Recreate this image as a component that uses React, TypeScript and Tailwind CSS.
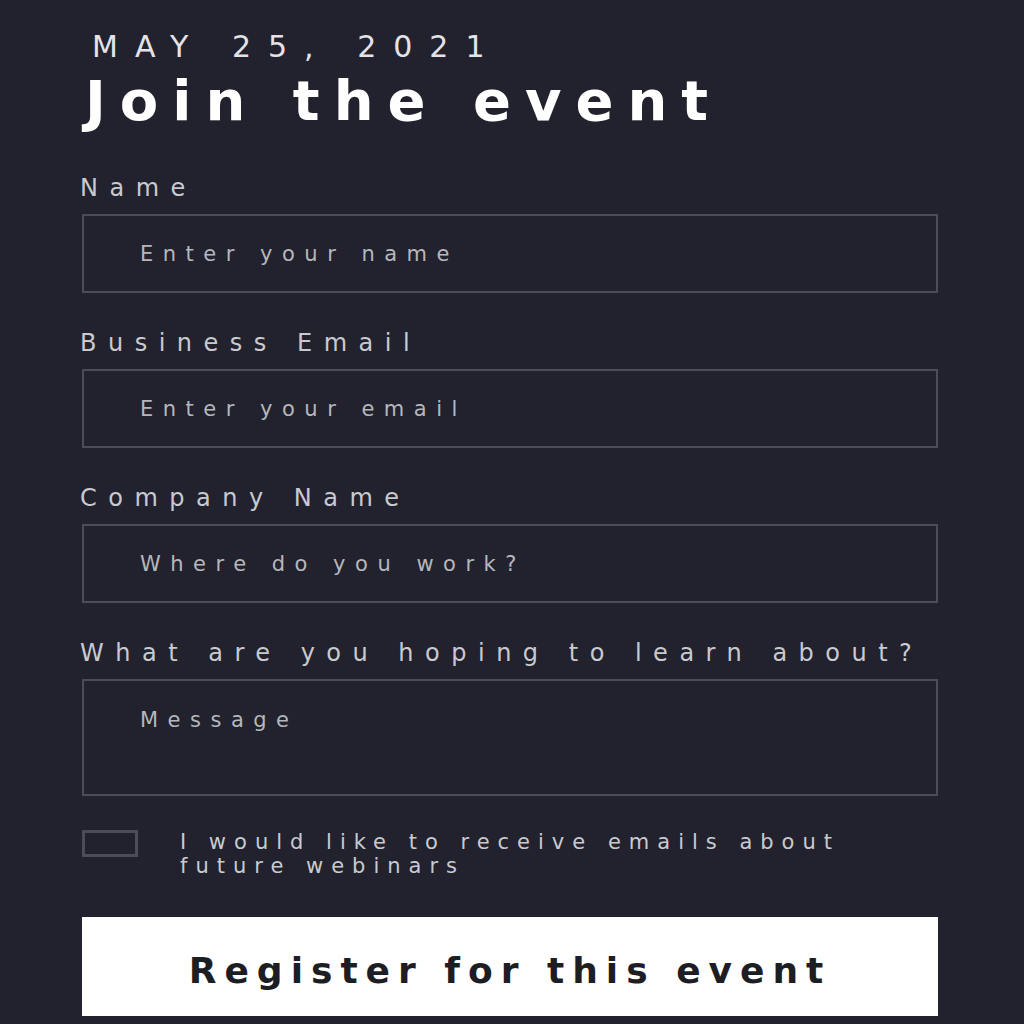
import React from "react"

const Field = ({ label, placeholder, tall }: { label: string; placeholder: string; tall?: boolean }) => (
  <div className="flex flex-col">
    <label className="ml-[-2px] text-[24px] leading-[28px] tracking-[11.5px] text-[#c9cad0]">{label}</label>
    {tall ? (
      <textarea
        placeholder={placeholder}
        className="mt-[12px] h-[117px] w-full resize-none border-2 border-[#4b4c57] bg-transparent px-[56px] pt-[26px] text-[21px] leading-[26px] tracking-[9.5px] text-white outline-none placeholder:text-[#b6b7bd]"
      />
    ) : (
      <input
        placeholder={placeholder}
        className="mt-[12px] h-[79px] w-full border-2 border-[#4b4c57] bg-transparent px-[56px] text-[21px] tracking-[9.5px] text-white outline-none placeholder:text-[#b6b7bd]"
      />
    )}
  </div>
)

export default function App() {
  return (
    <div className="min-h-screen w-full bg-[#21222d] font-['DejaVu_Sans',sans-serif]">
      <div className="flex w-[938px] flex-col pl-[82px] pt-[29px]">
        <p className="pl-[10px] text-[30px] leading-[36px] tracking-[17px] text-[#e4e4e8]">MAY 25, 2021</p>
        <h1 className="ml-[3px] mt-[4px] text-[56px] font-bold leading-[64px] tracking-[14px] text-white">Join the event</h1>

        <form className="mt-[41px] flex flex-col gap-[36px]">
          <Field label="Name" placeholder="Enter your name" />
          <Field label="Business Email" placeholder="Enter your email" />
          <Field label="Company Name" placeholder="Where do you work?" />
          <Field label="What are you hoping to learn about?" placeholder="Message" tall />
        </form>

        <label className="mt-[34px] flex items-start gap-[42px]">
          <input type="checkbox" className="h-[27px] w-[56px] shrink-0 appearance-none border-[3px] border-[#4b4c57] bg-transparent" />
          <span className="text-[21px] leading-[24px] tracking-[8px] text-[#c9cad0]">
            I would like to receive emails about
            <br />
            future webinars
          </span>
        </label>

        <button className="mt-[39px] h-[99px] w-full bg-white pt-[8px] text-[36px] font-bold tracking-[8px] text-[#1d1d24]">
          Register for this event
        </button>
      </div>
    </div>
  )
}
